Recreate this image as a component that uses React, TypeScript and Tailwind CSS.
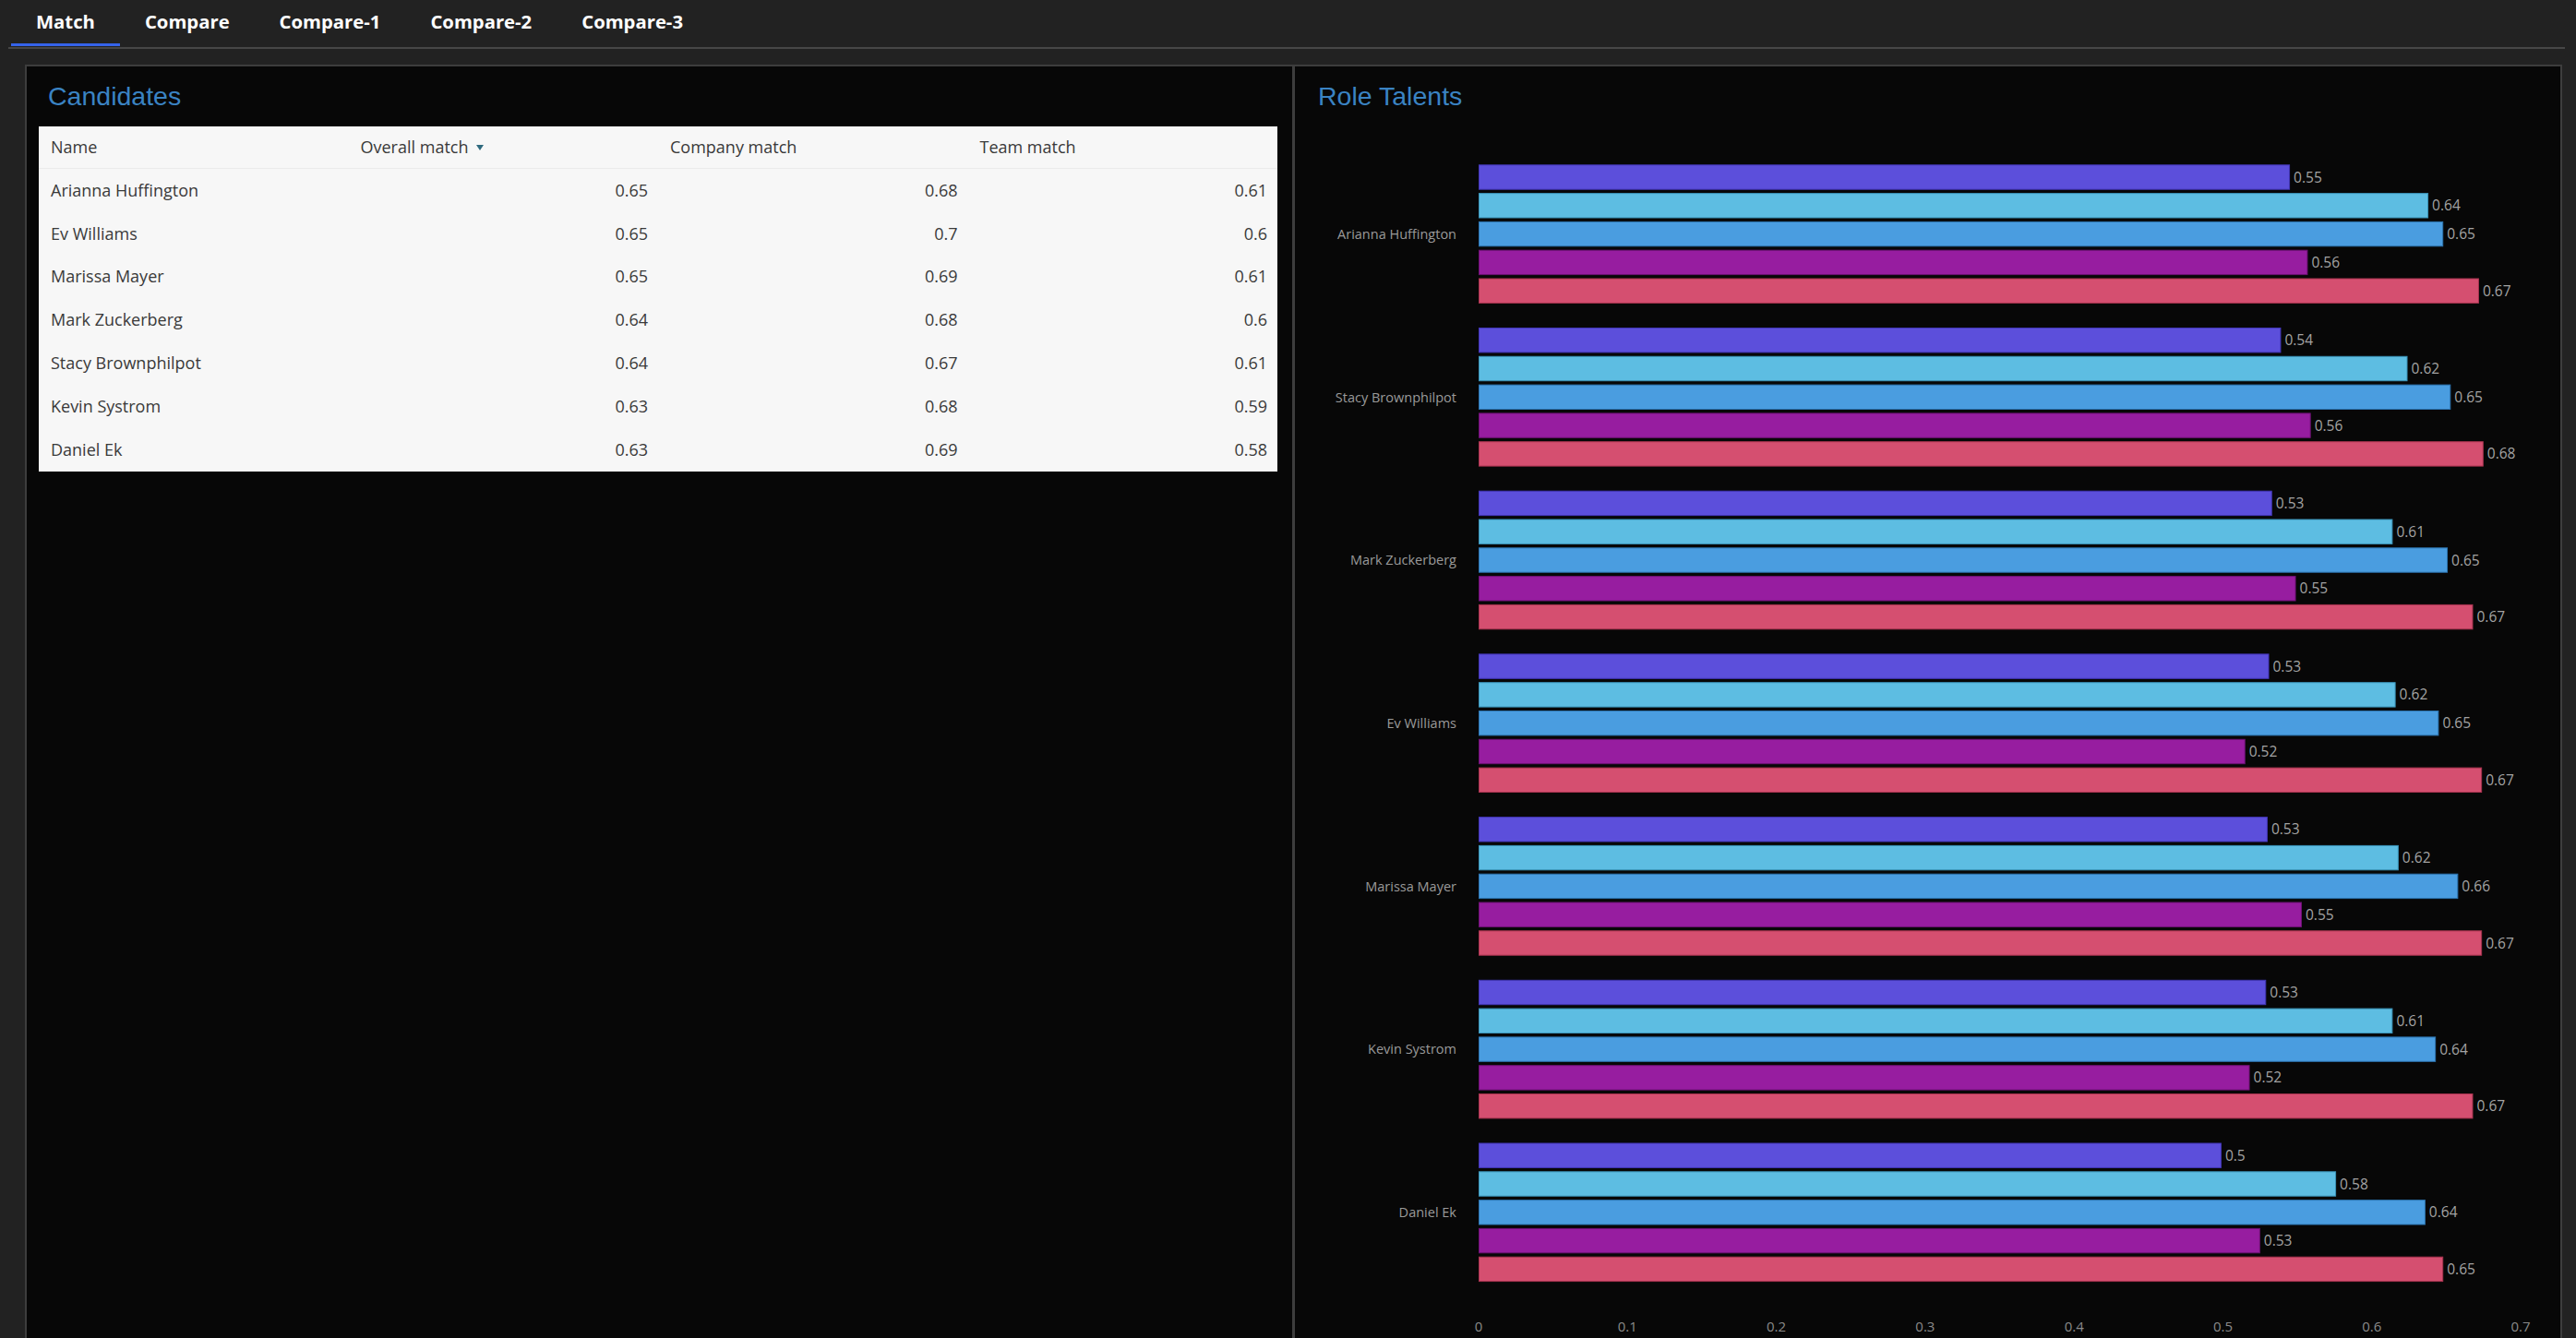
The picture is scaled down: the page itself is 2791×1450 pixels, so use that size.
import clsx from "clsx";

const tabs = ["Match", "Compare", "Compare-1", "Compare-2", "Compare-3"];

const candidates = [
  { name: "Arianna Huffington", overall: "0.65", company: "0.68", team: "0.61" },
  { name: "Ev Williams", overall: "0.65", company: "0.7", team: "0.6" },
  { name: "Marissa Mayer", overall: "0.65", company: "0.69", team: "0.61" },
  { name: "Mark Zuckerberg", overall: "0.64", company: "0.68", team: "0.6" },
  { name: "Stacy Brownphilpot", overall: "0.64", company: "0.67", team: "0.61" },
  { name: "Kevin Systrom", overall: "0.63", company: "0.68", team: "0.59" },
  { name: "Daniel Ek", overall: "0.63", company: "0.69", team: "0.58" },
];

const barColors = [
  { fill: "#5c4fdb", stroke: "#4336b8" },
  { fill: "#5dbde2", stroke: "#3a93b8" },
  { fill: "#4a9de0", stroke: "#2c74b0" },
  { fill: "#971da0", stroke: "#6e1275" },
  { fill: "#d54f70", stroke: "#a8334f" },
];

// values: raw scores (bar length), labels: rounded text next to the bar
const talents = [
  { name: "Arianna Huffington", values: [0.545, 0.638, 0.648, 0.557, 0.672], labels: ["0.55", "0.64", "0.65", "0.56", "0.67"] },
  { name: "Stacy Brownphilpot", values: [0.539, 0.624, 0.653, 0.559, 0.675], labels: ["0.54", "0.62", "0.65", "0.56", "0.68"] },
  { name: "Mark Zuckerberg", values: [0.533, 0.614, 0.651, 0.549, 0.668], labels: ["0.53", "0.61", "0.65", "0.55", "0.67"] },
  { name: "Ev Williams", values: [0.531, 0.616, 0.645, 0.515, 0.674], labels: ["0.53", "0.62", "0.65", "0.52", "0.67"] },
  { name: "Marissa Mayer", values: [0.53, 0.618, 0.658, 0.553, 0.674], labels: ["0.53", "0.62", "0.66", "0.55", "0.67"] },
  { name: "Kevin Systrom", values: [0.529, 0.614, 0.643, 0.518, 0.668], labels: ["0.53", "0.61", "0.64", "0.52", "0.67"] },
  { name: "Daniel Ek", values: [0.499, 0.576, 0.636, 0.525, 0.648], labels: ["0.5", "0.58", "0.64", "0.53", "0.65"] },
];

const ticks = ["0", "0.1", "0.2", "0.3", "0.4", "0.5", "0.6", "0.7"];

const X0 = 199;
const UNIT = 1613;
const GROUP_TOP = 58.3;
const GROUP_PITCH = 176.7;
const BAR_PITCH = 30.8;
const BAR_H = 27.4;

function SortArrow() {
  return (
    <svg width="8" height="6" viewBox="0 0 8 6" className="ml-[9px] inline-block">
      <path d="M0 0 L8 0 L4 6 Z" fill="#2f6a7e" />
    </svg>
  );
}

function CandidatesTable() {
  return (
    <div className="mt-[17px] bg-[#f7f7f7] text-[18px] text-[#3a3a3a]">
      <div className="grid h-[46px] grid-cols-4 items-center border-b border-[#ebebeb]">
        <div className="pl-[13px]">Name</div>
        <div className="flex items-center pl-[13px]">
          Overall match
          <SortArrow />
        </div>
        <div className="pl-[13px]">Company match</div>
        <div className="pl-[13px]">Team match</div>
      </div>
      {candidates.map((c) => (
        <div key={c.name} className="grid h-[46.8px] grid-cols-4 items-center">
          <div className="pl-[13px]">{c.name}</div>
          <div className="pr-[11px] text-right">{c.overall}</div>
          <div className="pr-[11px] text-right">{c.company}</div>
          <div className="pr-[11px] text-right">{c.team}</div>
        </div>
      ))}
    </div>
  );
}

function TalentsChart() {
  return (
    <svg width="1371" height="1330" className="block overflow-visible" style={{ fontFamily: "'Open Sans', sans-serif" }}>
      {talents.map((t, g) => {
        const top = GROUP_TOP + g * GROUP_PITCH;
        const mid = top + (4 * BAR_PITCH + BAR_H) / 2;
        return (
          <g key={t.name}>
            <text x={175} y={mid + 5.2} textAnchor="end" fontSize="14.5" fill="#9a9a9a">
              {t.name}
            </text>
            {t.values.map((v, i) => {
              const y = top + i * BAR_PITCH;
              const w = v * UNIT;
              return (
                <g key={i}>
                  <rect
                    x={X0 + 0.5}
                    y={y + 0.5}
                    width={w - 1}
                    height={BAR_H - 1}
                    fill={barColors[i].fill}
                    stroke={barColors[i].stroke}
                    strokeWidth="1"
                  />
                  <text x={X0 + w + 4} y={y + BAR_H / 2 + 5.5} fontSize="15.5" fill="#a3a3a3">
                    {t.labels[i]}
                  </text>
                </g>
              );
            })}
          </g>
        );
      })}
      {ticks.map((tick, i) => (
        <text key={tick} x={X0 + i * 0.1 * UNIT} y={1322.5} textAnchor="middle" fontSize="15" fill="#8a8a8a">
          {tick}
        </text>
      ))}
    </svg>
  );
}

export default function App() {
  return (
    <div className="flex h-screen flex-col overflow-hidden bg-[#222222] font-['Open_Sans',sans-serif]">
      <nav className="ml-[9px] mr-[12px] flex h-[53px] items-end border-b-2 border-[#474747] pb-px pl-[3px]">
        {tabs.map((tab, i) => (
          <div
            key={tab}
            className={clsx(
              "flex h-[50px] items-center border-b-[3px] px-[27px] text-[20.3px] font-bold text-white",
              i === 0 ? "border-[#3563e9]" : "border-transparent",
            )}
          >
            {tab}
          </div>
        ))}
      </nav>

      <div className="flex flex-1 pl-[27px] pr-[15px] pt-[17px]">
        <div className="flex flex-1 border-2 border-b-0 border-[#3d3d3d] bg-[#070707]">
          <section className="w-[1374px] border-r-[3px] border-[#3d3d3d] pl-[13px] pr-[16px] pt-[16px]">
            <h2 className="ml-[10px] font-['Liberation_Sans',sans-serif] text-[28.5px] leading-[32px] text-[#3a83c3]">
              Candidates
            </h2>
            <CandidatesTable />
          </section>

          <section className="flex-1 pt-[16px]">
            <h2 className="pl-[25px] font-['Liberation_Sans',sans-serif] text-[28.5px] leading-[32px] text-[#3a83c3]">
              Role Talents
            </h2>
            <TalentsChart />
          </section>
        </div>
      </div>
    </div>
  );
}
